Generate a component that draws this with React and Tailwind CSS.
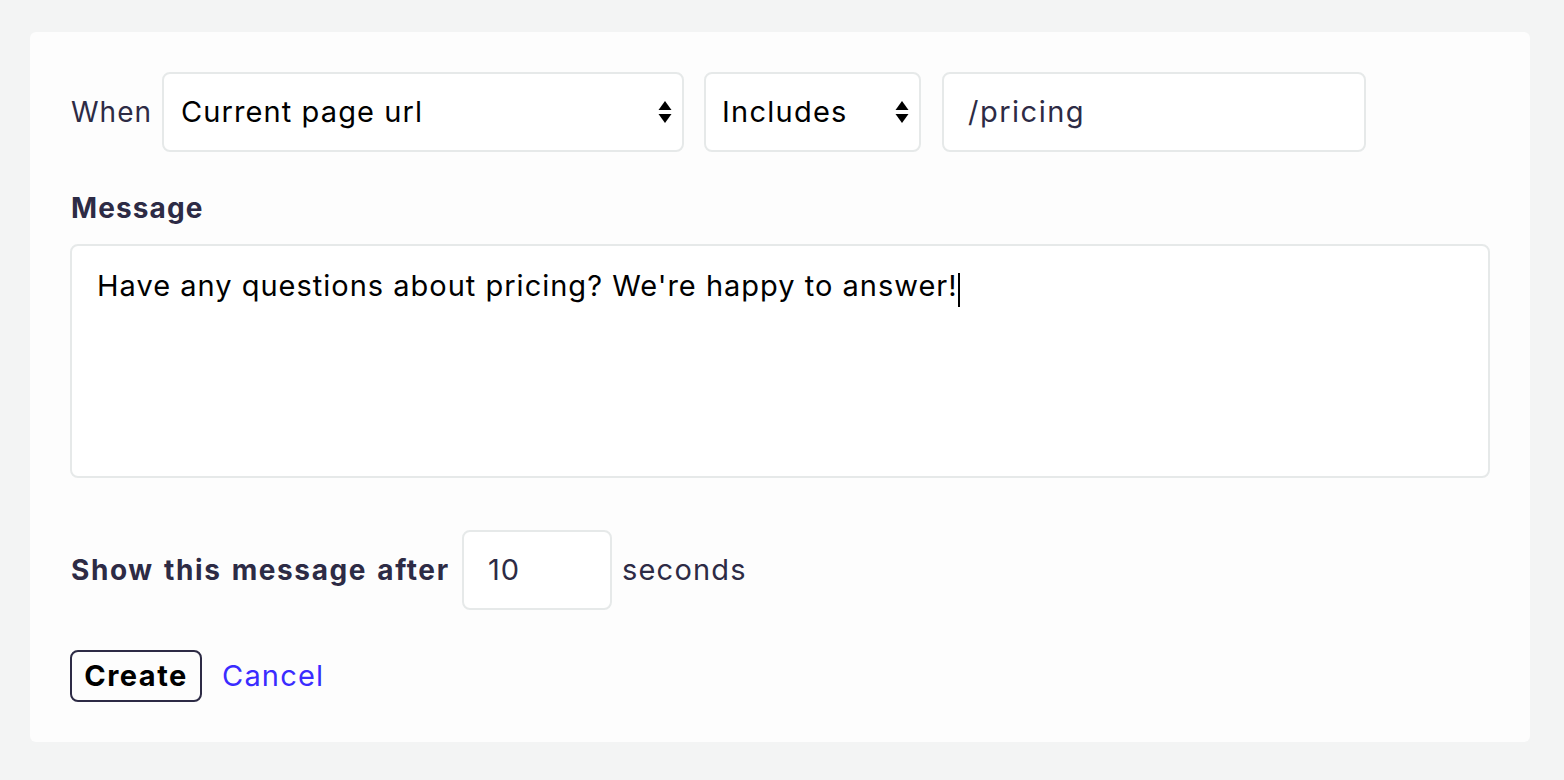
import React from "react";

function Arrows() {
  return (
    <svg width="14" height="24" viewBox="0 0 14 24" className="shrink-0">
      <polygon points="7,1 13.5,10 0.5,10" fill="#000" />
      <polygon points="7,23 13.5,14 0.5,14" fill="#000" />
    </svg>
  );
}

export default function App() {
  return (
    <div
      className="min-h-[780px] w-full bg-[#f3f4f4] pt-[32px] pl-[30px] pr-[34px]"
      style={{ fontFamily: "Inter, 'Noto Sans', sans-serif" }}
    >
      <div className="w-[1500px] rounded-[6px] bg-[#fdfdfd] px-[40px] pt-[40px] pb-[40px]">
        <div className="flex items-center">
          <span className="text-[28px] tracking-[1px] text-[#2d2b45] ml-[1px] w-[80px]">When</span>
          <div className="ml-[11px] flex h-[80px] w-[522px] items-center justify-between rounded-[8px] border-2 border-[#e6e9e9] bg-white pl-[17px] pr-[10px]">
            <span className="text-[29px] tracking-[1.1px] text-black">Current page url</span>
            <Arrows />
          </div>
          <div className="ml-[20px] flex h-[80px] w-[217px] items-center justify-between rounded-[8px] border-2 border-[#e6e9e9] bg-white pl-[16px] pr-[10px]">
            <span className="text-[29px] tracking-[1.25px] text-black">Includes</span>
            <Arrows />
          </div>
          <div className="ml-[21px] flex h-[80px] w-[424px] items-center rounded-[8px] border-2 border-[#e6e9e9] bg-white pl-[24px]">
            <span className="text-[29px] tracking-[1.5px] text-[#2d2b45]">/pricing</span>
          </div>
        </div>

        <div className="mt-[38px] text-[28px] leading-[36px] tracking-[1.1px] font-bold text-[#2d2b45] ml-[1px]">Message</div>

        <div className="mt-[18px] h-[234px] w-[1420px] rounded-[8px] border-2 border-[#e6e9e9] bg-white pl-[25px] pt-[20px]">
          <span className="text-[29px] leading-[40px] tracking-[1px] text-black">
            Have any questions about pricing? We're happy to answer!
          </span>
          <span className="inline-block h-[34px] w-[2px] bg-black align-middle -mt-[4px]" />
        </div>

        <div className="mt-[52px] flex items-center">
          <span className="w-[380px] text-[28px] font-bold tracking-[1.6px] [word-spacing:2px] whitespace-nowrap text-[#2d2b45] ml-[1px]">Show this message after</span>
          <div className="ml-[11px] flex h-[80px] w-[150px] items-center rounded-[8px] border-2 border-[#e6e9e9] bg-white pl-[24px]">
            <span className="text-[29px] tracking-[1px] text-[#2d2b45]">10</span>
          </div>
          <span className="ml-[10px] text-[29px] tracking-[1.2px] text-[#2d2b45]">seconds</span>
        </div>

        <div className="mt-[40px] flex items-center">
          <div className="flex h-[52px] w-[132px] items-center justify-center rounded-[8px] border-2 border-[#2d2b45]">
            <span className="text-[29px] font-bold tracking-[1.5px] text-black">Create</span>
          </div>
          <span className="ml-[20px] text-[29px] tracking-[1.2px] text-[#3a2cff]">Cancel</span>
        </div>
      </div>
    </div>
  );
}
